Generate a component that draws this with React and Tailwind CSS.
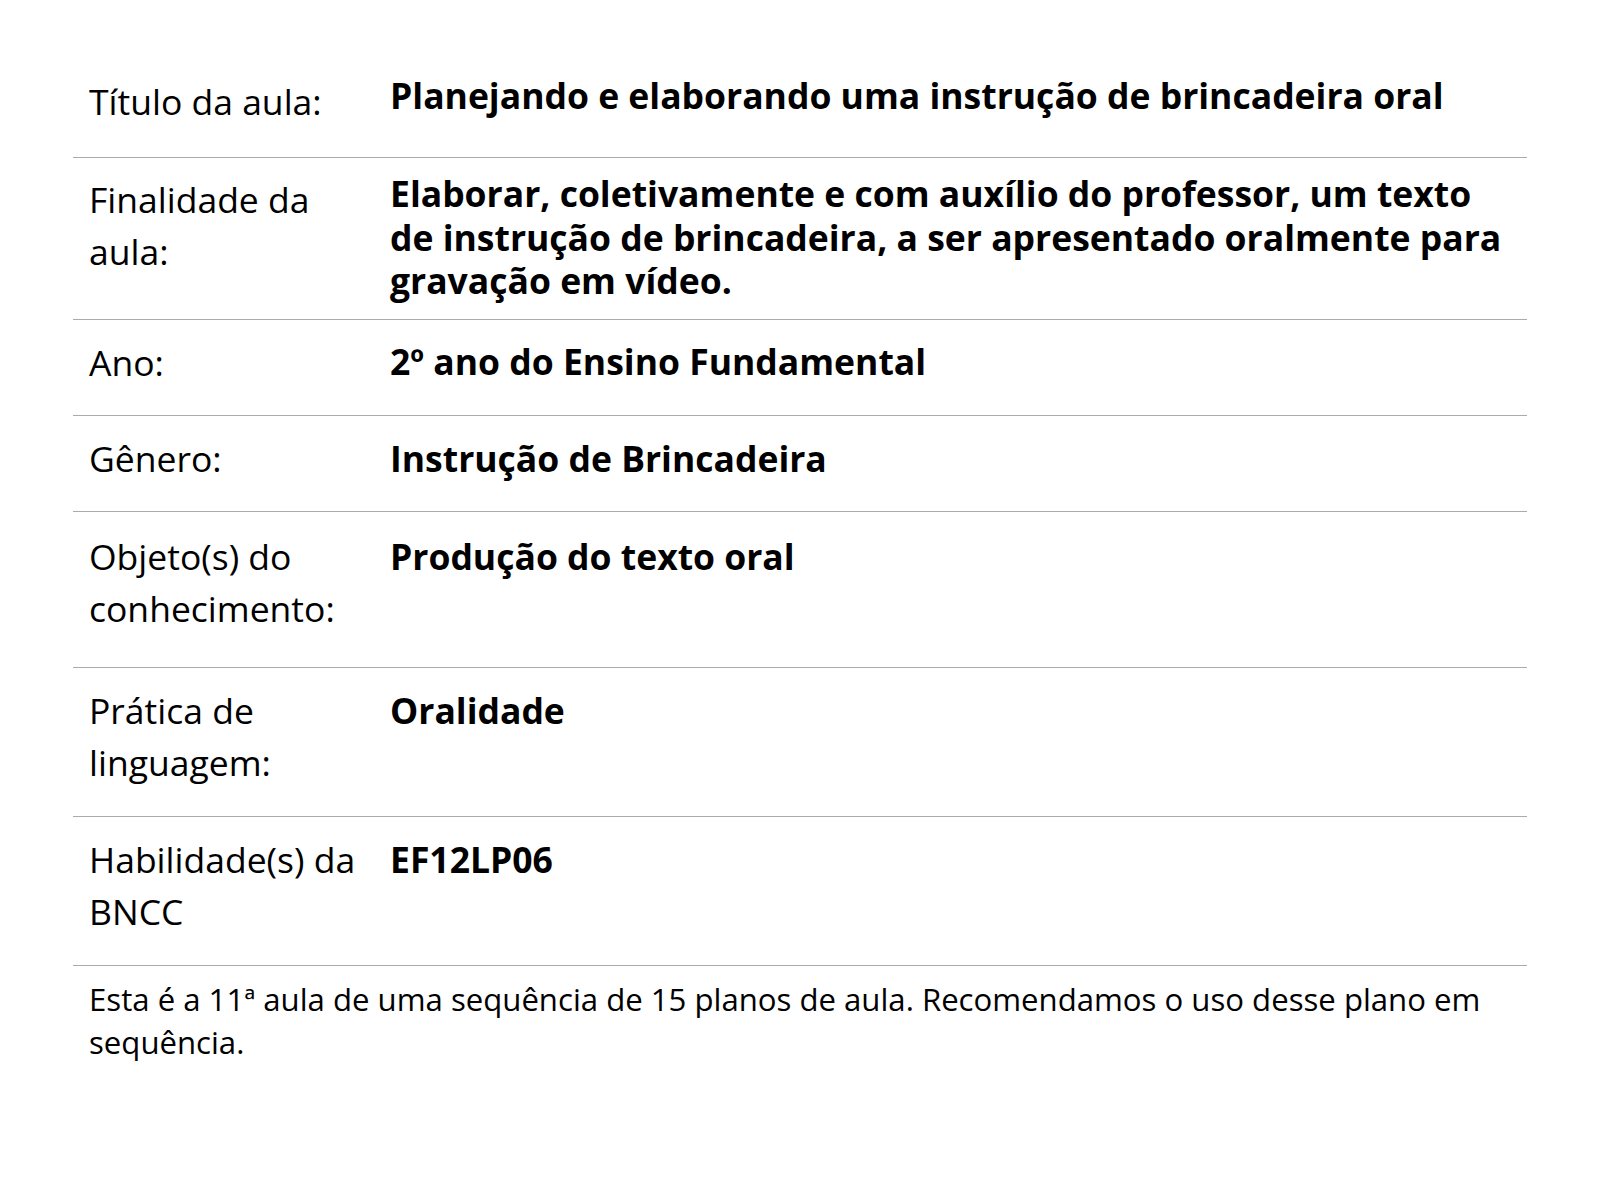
export default function App() {
  const font = { fontFamily: '"Open Sans", "Noto Sans", sans-serif' };
  const rows = [
    { label: "Título da aula:", value: "Planejando e elaborando uma instrução de brincadeira oral", h: "h-[102px]", lp: "pt-[20px]", vp: "pt-[18px]" },
    { label: "Finalidade da aula:", value: "Elaborar, coletivamente e com auxílio do professor, um texto de instrução de brincadeira, a ser apresentado oralmente para gravação em vídeo.", h: "h-[162px]", lp: "pt-[16px]", vp: "pt-[14px]" },
    { label: "Ano:", value: "2º ano do Ensino Fundamental", h: "h-[96px]", lp: "pt-[17px]", vp: "pt-[20px]" },
    { label: "Gênero:", value: "Instrução de Brincadeira", h: "h-[96px]", lp: "pt-[17px]", vp: "pt-[21px]" },
    { label: "Objeto(s) do conhecimento:", value: "Produção do texto oral", h: "h-[156px]", lp: "pt-[19px]", vp: "pt-[23px]" },
    { label: "Prática de linguagem:", value: "Oralidade", h: "h-[149px]", lp: "pt-[17px]", vp: "pt-[21px]" },
    { label: "Habilidade(s) da BNCC", value: "EF12LP06", h: "h-[149px]", lp: "pt-[17px]", vp: "pt-[21px]" },
  ];
  return (
    <div className="min-h-[1200px] bg-white text-black pt-[56px]" style={font}>
      <div className="mx-[73px] w-[1454px]">
        {rows.map((r, i) => (
          <div key={i} className={`flex border-b border-[#ababab] ${r.h}`}>
            <div className={`w-[317px] shrink-0 pl-4 pr-4 text-[35.5px] leading-[51.5px] ${r.lp}`}>{r.label}</div>
            <div className={`flex-1 pr-4 text-[35.5px] leading-[43.5px] font-bold ${r.vp}`}>{r.value}</div>
          </div>
        ))}
        <div className="pl-4 pr-4 pt-[12px] text-[31.15px] leading-[43px]">
          Esta é a 11ª aula de uma sequência de 15 planos de aula. Recomendamos o uso desse plano em sequência.
        </div>
      </div>
    </div>
  );
}
